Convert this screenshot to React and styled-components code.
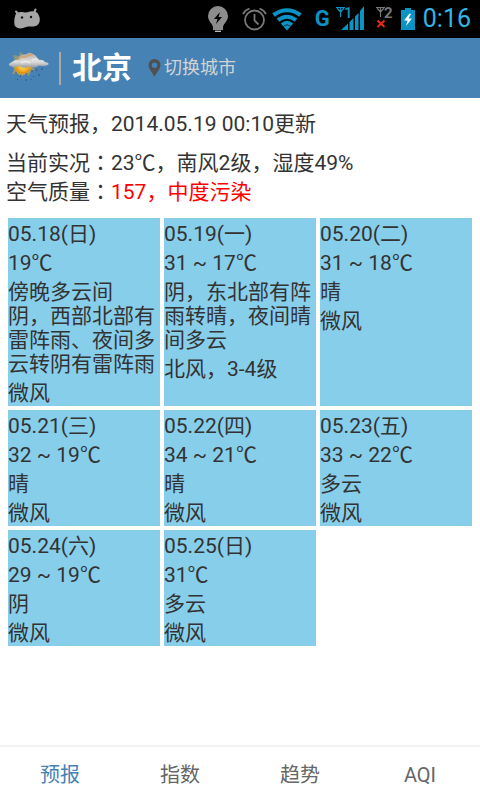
import React, { useState } from "react";
import styled, { createGlobalStyle } from "styled-components";

const GlobalStyle = createGlobalStyle`
  * { box-sizing: border-box; }
  body {
    margin: 0;
    background: #fff;
    color: #333;
    font-family: Roboto, "Noto Sans CJK SC", sans-serif;
    font-size: 21px;
    line-height: 24px;
  }
  button { font-family: inherit; border: 0; background: none; padding: 0; cursor: pointer; }
  svg { display: block; flex: none; }
`;

const Screen = styled.div`
  display: flex;
  flex-direction: column;
  min-height: 100vh;
`;

const StatusBar = styled.div`
  display: flex;
  align-items: center;
  height: 38px;
  padding: 0 9px 0 12px;
  background: #000;
`;

const StatusGroup = styled.div`
  display: flex;
  align-items: center;
  margin-left: auto;
`;

const Network = styled.span`
  width: 21px;
  margin-left: 13px;
  color: #0a93c4;
  font-size: 22px;
  font-weight: 700;
`;

const Clock = styled.time`
  margin-left: 8px;
  color: #33b5e5;
  font-size: 25px;
`;

const StatusIcon = styled.svg`
  margin-left: ${(p) => p.$gap || 0}px;
`;

const Header = styled.header`
  display: flex;
  align-items: center;
  height: 60px;
  padding: 0 8px;
  background: #4682b4;
  color: #fff;
`;

const Divider = styled.span`
  width: 2px;
  height: 33px;
  margin: 0 11px 0 9px;
  background: #a9a9a9;
`;

const City = styled.h1`
  margin: 0;
  font-size: 30px;
  line-height: 36px;
  font-weight: 700;
`;

const SwitchCity = styled.button`
  display: flex;
  align-items: center;
  gap: 3px;
  margin-left: 16px;
  color: #d3d3d3;
  font-size: 18px;
  line-height: 24px;
`;

const Summary = styled.section`
  padding: 14px 6px 0;
`;

const Line = styled.p`
  margin: 0 0 ${(p) => (p.$spaced ? 15 : 5)}px;
`;

const CenteredColon = styled.span`
  font-family: "Noto Sans CJK TC", sans-serif;
  line-height: 1;
`;

const Alert = styled.span`
  color: #f00;
`;

const Forecast = styled.ul`
  display: grid;
  grid-template-columns: repeat(3, 1fr);
  gap: 4px;
  margin: 14px 8px 16px;
  padding: 0;
  list-style: none;
`;

const Day = styled.li`
  display: flex;
  flex-direction: column;
  gap: 5px;
  padding: 4px 0 1px;
  background: #87ceeb;
`;

const DayText = styled.span`
  white-space: pre-line;
`;

const Tabs = styled.nav`
  display: grid;
  grid-template-columns: repeat(4, 1fr);
  height: 55px;
  margin-top: auto;
  border-top: 2px solid #f3f3f3;
`;

const Tab = styled.button`
  padding-top: 3px;
  color: ${(p) => (p.$active ? "#4682b4" : "#666")};
  font-size: 20px;
  line-height: 24px;
`;

const DAYS = [
  ["05.18(日)", "19℃", "傍晚多云间\n阴，西部北部有雷阵雨、夜间多云转阴有雷阵雨", "微风"],
  ["05.19(一)", "31 ~ 17℃", "阴，东北部有阵雨转晴，夜间晴间多云", "北风，3-4级"],
  ["05.20(二)", "31 ~ 18℃", "晴", "微风"],
  ["05.21(三)", "32 ~ 19℃", "晴", "微风"],
  ["05.22(四)", "34 ~ 21℃", "晴", "微风"],
  ["05.23(五)", "33 ~ 22℃", "多云", "微风"],
  ["05.24(六)", "29 ~ 19℃", "阴", "微风"],
  ["05.25(日)", "31℃", "多云", "微风"],
];

const TABS = ["预报", "指数", "趋势", "AQI"];

const RobotIcon = () => (
  <StatusIcon width="30" height="22" viewBox="0 0 30 22" aria-hidden="true">
    <path d="M4 3.5 6.5 6.5M23.5 1.5 22 5" stroke="#a6a6a6" strokeWidth="2" strokeLinecap="round" />
    <path d="M4 5.500Q6 3.500 10 4 14 5 18 3.500 23 2.500 25.500 5C29 10 28.500 16 24 18 20 19 17 18 14 19 9 21.500 4 20.500 2.500 17Q1.500 11 4 5.500Z" fill="#a6a6a6" />
    <circle cx="10" cy="9.500" r="1.200" fill="#111" />
    <circle cx="19" cy="9" r="1.200" fill="#111" />
  </StatusIcon>
);

const BulbIcon = () => (
  <StatusIcon width="20" height="26" viewBox="0 0 20 26" aria-hidden="true">
    <path d="M10 0A10 10 0 0 1 20 10C20 15 16 17 15 21V24H5V21C4 17 0 15 0 10A10 10 0 0 1 10 0Z" fill="#8c8c8c" />
    <path d="M12 6 6 13H9.500L8 18 14 11H10.500Z" fill="#000" />
    <path d="M7 25.300H13" stroke="#bbb" strokeWidth="1.400" />
  </StatusIcon>
);

const AlarmIcon = () => (
  <StatusIcon $gap={14} width="25" height="24" viewBox="0 0 25 24" fill="none" stroke="#777" strokeWidth="1.800" aria-hidden="true">
    <circle cx="12.500" cy="13" r="9.500" />
    <path d="M12.500 7V13.500L16.500 17.500M1 7Q3 3 7.500 1.500M24 7Q22 3 17.500 1.500" />
  </StatusIcon>
);

const WifiIcon = () => (
  <StatusIcon $gap={5} width="30" height="23" viewBox="0 0 30 23" aria-hidden="true">
    <g fill="none" stroke="#0a93c4" strokeWidth="4">
      <path d="M1.500 7Q15-2.500 28.500 7" />
      <path d="M6 12.200Q15 5.200 24 12.200" />
      <path d="M10 16.800Q15 12.500 20 16.800" strokeWidth="3.500" />
    </g>
    <path d="M11.500 18.500Q15 16 18.500 18.500L15 22.500Z" fill="#0a93c4" />
  </StatusIcon>
);

const Antenna = ({ color }) => (
  <path d="M0 1.500H9M1 2 4.500 6 8 2M4.500 1.500V11" fill="none" stroke={color} strokeWidth="1.200" />
);

const SignalIcon = () => (
  <StatusIcon width="29" height="36" viewBox="0 -5 29 36" aria-label="SIM 1">
    <Antenna color="#0a93c4" />
    <text x="8" y="12" fill="#0a93c4" fontSize="15" fontWeight="500">1</text>
    <path d="M5 24 12 17.500V24ZM13.500 24V16L17.500 12V24ZM19 24V10.500L22.500 7V24ZM24 24V5L28 0V24Z" fill="#0a93c4" />
  </StatusIcon>
);

const NoSignalIcon = () => (
  <StatusIcon $gap={11} width="17" height="36" viewBox="0 -5 17 36" aria-label="SIM 2">
    <Antenna color="#777" />
    <text x="8" y="12" fill="#777" fontSize="15" fontWeight="700">2</text>
    <path d="M1.500 14.500 8.500 21M8.500 14.500 1.500 21" stroke="#f32b10" strokeWidth="1.800" />
  </StatusIcon>
);

const BatteryIcon = () => (
  <StatusIcon $gap={8} width="14" height="22" viewBox="0 0 14 22" aria-hidden="true">
    <path d="M4 0H10V2H14V22H0V2H4Z" fill="#0a93c4" />
    <path d="M8.500 5.500 3 12.500H6.500L5 18 11 10.500H7.500L10 6Z" fill="#fff" />
  </StatusIcon>
);

const WeatherIcon = () => (
  <svg width="42" height="32" viewBox="0 0 42 32" aria-hidden="true">
    <defs>
      <radialGradient id="sun">
        <stop offset="0" stopColor="#ffe267" />
        <stop offset=".65" stopColor="#f2a51c" />
        <stop offset="1" stopColor="#c8a443" stopOpacity=".7" />
      </radialGradient>
      <linearGradient id="cloud" x2="0" y2="1">
        <stop offset="0" stopColor="#b5aa9c" />
        <stop offset=".6" stopColor="#dedede" />
        <stop offset="1" stopColor="#979b9e" />
      </linearGradient>
    </defs>
    <path d="M12 0 16 3 22 1 22 7 27 8 24 13 27 18 23 19 21 24 17 22 13 25 10 22 4 22 6 17 2 11 7 9 5 3 11 4Z" fill="#b7a45c" opacity=".6" />
    <circle cx="15" cy="14" r="9" fill="url(#sun)" />
    <path d="M8 17Q10 21 15 21 20 21 22 17" fill="none" stroke="#e09017" strokeWidth="1.500" />
    <path d="M2 14Q-1 12 4 10 6 7.500 10 7.500 12 2 18 2.500 21-1 26 2.500 30 5 30 8 35 7 37 10 42 11 40 13 36 14.500 31 13.500 27 17 22 14.500 16 17 11 14 6 16 2 14Z" fill="url(#cloud)" />
    <path d="M10 8Q12 4 17 5L24 2" fill="none" stroke="#d19a69" strokeWidth="2" opacity=".7" />
    <path d="M24 8Q28 6 31 8M13 11Q18 8 22 11" fill="none" stroke="#f4f4f4" strokeWidth="1.500" opacity=".7" />
    <path d="M8 20V22M13 23 12 25M19 21 18 23M24 18V20M29 17 28 19M34 16V18M10 27 9 28M18 27V29M26 24 25 25M31 22V24M23 27V28" stroke="#28507c" strokeWidth="1" opacity=".85" />
  </svg>
);

const PinIcon = () => (
  <svg width="13" height="18" viewBox="0 0 13 18" aria-hidden="true">
    <path fillRule="evenodd" d="M6.500 0A6 6 0 0 1 12.500 6C12.500 10 8 14 6.500 18 5 14 .5 10 .5 6A6 6 0 0 1 6.500 0ZM6.500 3.500A2.700 2.700 0 1 0 6.500 8.900 2.700 2.700 0 0 0 6.500 3.500Z" fill="#505050" />
  </svg>
);

export default function App() {
  const [active, setActive] = useState("预报");
  return (
    <>
      <GlobalStyle />
      <Screen lang="zh-CN">
        <StatusBar>
          <RobotIcon />
          <StatusGroup>
            <BulbIcon />
            <AlarmIcon />
            <WifiIcon />
            <Network>G</Network>
            <SignalIcon />
            <NoSignalIcon />
            <BatteryIcon />
            <Clock>0:16</Clock>
          </StatusGroup>
        </StatusBar>
        <Header>
          <WeatherIcon />
          <Divider />
          <City>北京</City>
          <SwitchCity type="button">
            <PinIcon />
            切换城市
          </SwitchCity>
        </Header>
        <main>
          <Summary>
            <Line $spaced>天气预报，2014.05.19 00:10更新</Line>
            <Line>当前实况<CenteredColon lang="zh-TW">：</CenteredColon>23℃，南风2级，湿度49%</Line>
            <Line>空气质量<CenteredColon lang="zh-TW">：</CenteredColon><Alert>157，中度污染</Alert></Line>
          </Summary>
          <Forecast>
            {DAYS.map((day) => (
              <Day key={day[0]}>
                {day.map((text) => (
                  <DayText key={text}>{text}</DayText>
                ))}
              </Day>
            ))}
          </Forecast>
        </main>
        <Tabs>
          {TABS.map((tab) => (
            <Tab key={tab} type="button" $active={tab === active} onClick={() => setActive(tab)}>
              {tab}
            </Tab>
          ))}
        </Tabs>
      </Screen>
    </>
  );
}
